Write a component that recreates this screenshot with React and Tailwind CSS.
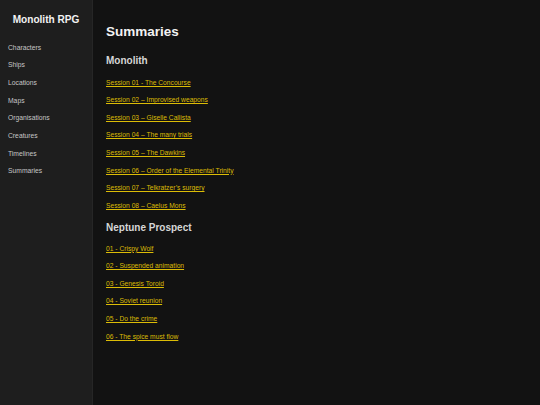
import React from "react";

const monolith = [
  "Session 01 - The Concourse",
  "Session 02 – Improvised weapons",
  "Session 03 – Giselle Callista",
  "Session 04 – The many trials",
  "Session 05 – The Dawkins",
  "Session 06 – Order of the Elemental Trinity",
  "Session 07 – Telkratzer’s surgery",
  "Session 08 – Caelus Mons",
];

const neptune = [
  "01 - Crispy Wolf",
  "02 - Suspended animation",
  "03 - Genesis Toroid",
  "04 - Soviet reunion",
  "05 - Do the crime",
  "06 - The spice must flow",
];

const nav = [
  "Characters",
  "Ships",
  "Locations",
  "Maps",
  "Organisations",
  "Creatures",
  "Timelines",
  "Summaries",
];

function LinkRow({ label }) {
  return (
    <div className="h-[17.6px] flex items-center">
      <a
        href="#"
        className="text-[6.7px] leading-none text-[#dcbc06] underline underline-offset-[1px]"
      >
        {label}
      </a>
    </div>
  );
}

export default function App() {
  return (
    <div
      className="flex w-[540px] h-[405px] bg-[#121212] overflow-hidden"
      style={{ fontFamily: '"Liberation Sans", Arial, sans-serif' }}
    >
      <aside className="w-[93px] shrink-0 h-full bg-[#1e1e1e] border-r border-[#262626] pt-[7.5px]">
        <div className="h-[24px] flex items-center justify-center text-[10.1px] font-bold text-[#f2f2f2]">
          Monolith RPG
        </div>
        <nav className="mt-[7.7px] pl-[8px]">
          {nav.map((n) => (
            <div
              key={n}
              className="h-[17.7px] flex items-center text-[6.75px] leading-none text-[#c6c6c6]"
            >
              {n}
            </div>
          ))}
        </nav>
      </aside>
      <main className="flex-1 pl-[13px] pt-[20.5px]">
        <h1 className="h-[24px] flex items-center text-[13.5px] font-bold text-[#f2f2f2]">
          Summaries
        </h1>
        <h2 className="mt-[6px] h-[20px] flex items-center text-[10px] font-bold text-[#d6d6d6]">
          Monolith
        </h2>
        <div className="mt-[3.7px]">
          {monolith.map((l) => (
            <LinkRow key={l} label={l} />
          ))}
        </div>
        <h2 className="mt-[3px] h-[20px] flex items-center text-[10px] font-bold text-[#d6d6d6]">
          Neptune Prospect
        </h2>
        <div className="mt-[2.2px]">
          {neptune.map((l) => (
            <LinkRow key={l} label={l} />
          ))}
        </div>
      </main>
    </div>
  );
}
